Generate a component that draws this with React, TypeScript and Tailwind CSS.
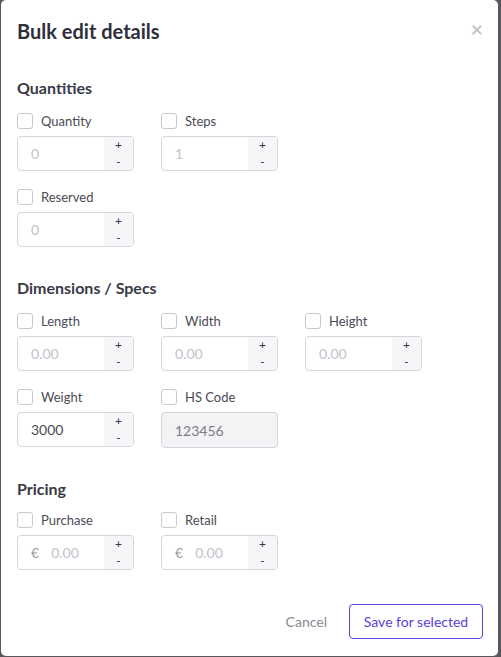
import React from 'react';

const font = { fontFamily: 'Lato, "Open Sans", sans-serif' };

interface FieldProps {
    label: string;
    value: string;
    filled?: boolean;
    prefix?: string;
    disabled?: boolean;
}

const Checkbox = ({ label }: { label: string }) => (
    <label className="flex items-center h-[20px] gap-[8px] cursor-pointer">
        <span className="w-[16px] h-[16px] rounded-[3px] border border-[#c9c9d1] bg-white" />
        <span className="pt-[2px] text-[13px] text-[#4b4b55]">{label}</span>
    </label>
);

const NumberField = ({ label, value, filled, prefix, disabled }: FieldProps) => (
    <div className="flex flex-col">
        <Checkbox label={label} />
        {disabled ? (
            <div className="mt-[5px] h-[36px] rounded-[4px] border border-[#d4d4da] bg-[#f3f3f5] flex items-center px-[13px] text-[14px] text-[#7c7c86]">
                {value}
            </div>
        ) : (
            <div className="mt-[5px] h-[35px] rounded-[4px] border border-[#d4d4da] bg-white flex overflow-hidden">
                <div className="flex-1 flex items-center pl-[13px] text-[14px]">
                    {prefix && <span className="text-[#9a9aa3] mr-[12px]">{prefix}</span>}
                    <span className={filled ? 'text-[#4b4b55]' : 'text-[#c3c3ca]'}>{value}</span>
                </div>
                <div className="w-[29px] flex flex-col bg-[#f6f6f8] text-[12px] text-[#33333d] leading-none">
                    <button type="button" className="flex-1 flex items-center justify-center">+</button>
                    <button type="button" className="flex-1 flex items-center justify-center">-</button>
                </div>
            </div>
        )}
    </div>
);

const SectionTitle = ({ children, className }: { children: React.ReactNode; className: string }) => (
    <h3 className={`text-[16px] leading-[24px] font-bold text-[#3a3a47] ${className}`}>{children}</h3>
);

const Row = ({ children, className }: { children: React.ReactNode; className: string }) => (
    <div className={`grid grid-cols-[117px_117px_117px] gap-x-[27px] ${className}`}>{children}</div>
);

export default function App() {
    return (
        <div className="h-[657px] bg-[#58585f] overflow-hidden" style={font}>
            <div className="relative ml-[1px] w-[497px] h-[656px] rounded-[5px] bg-white pl-[16px] pt-[17px]">
                <h2 className="text-[20px] leading-[28px] font-bold text-[#2f2f3b]">Bulk edit details</h2>
                <button type="button" className="absolute top-[18px] right-[15px] text-[21px] font-bold text-[#c4c4cb] leading-none">
                    ×
                </button>

                <SectionTitle className="mt-[31px]">Quantities</SectionTitle>
                <Row className="mt-[11px]">
                    <NumberField label="Quantity" value="0" />
                    <NumberField label="Steps" value="1" />
                </Row>
                <Row className="mt-[16px]">
                    <NumberField label="Reserved" value="0" />
                </Row>

                <SectionTitle className="mt-[29px]">Dimensions / Specs</SectionTitle>
                <Row className="mt-[11px]">
                    <NumberField label="Length" value="0.00" />
                    <NumberField label="Width" value="0.00" />
                    <NumberField label="Height" value="0.00" />
                </Row>
                <Row className="mt-[16px]">
                    <NumberField label="Weight" value="3000" filled />
                    <NumberField label="HS Code" value="123456" disabled />
                </Row>

                <SectionTitle className="mt-[29px]">Pricing</SectionTitle>
                <Row className="mt-[9px]">
                    <NumberField label="Purchase" value="0.00" prefix="€" />
                    <NumberField label="Retail" value="0.00" prefix="€" />
                </Row>

                <div className="mt-[34px] pr-[15px] flex justify-end items-center gap-[22px]">
                    <button type="button" className="text-[14px] text-[#8a8a94]">Cancel</button>
                    <button type="button" className="w-[134px] h-[35px] rounded-[4px] border border-[#5a43d8] text-[14px] text-[#5a43d8]">
                        Save for selected
                    </button>
                </div>
            </div>
        </div>
    );
}
